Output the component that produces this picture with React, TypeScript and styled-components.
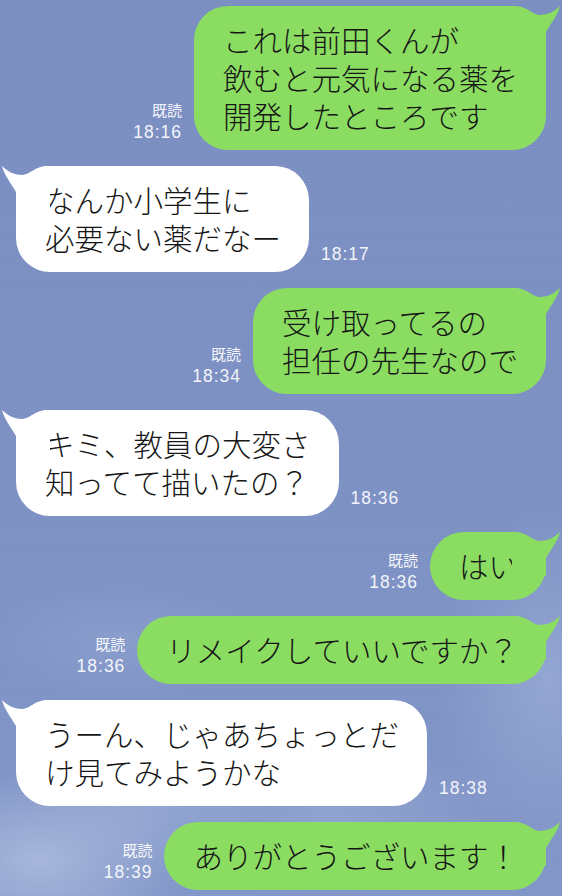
import React from "react";
import styled, { createGlobalStyle } from "styled-components";

const Global = createGlobalStyle`
  html, body { margin: 0; padding: 0; }
  body { background: #7b8fc2; }
`;

const Page = styled.div`
  width: 562px;
  height: 896px;
  overflow: hidden;
  box-sizing: border-box;
  padding-top: 6px;
  display: flex;
  flex-direction: column;
  gap: 16px;
  background:
    radial-gradient(ellipse 150px 90px at 40px 860px, rgba(205, 215, 238, 0.5), rgba(205, 215, 238, 0) 100%),
    radial-gradient(ellipse 120px 70px at 150px 800px, rgba(190, 203, 233, 0.3), rgba(190, 203, 233, 0) 100%),
    radial-gradient(ellipse 110px 170px at 550px 680px, rgba(185, 199, 232, 0.35), rgba(185, 199, 232, 0) 100%),
    radial-gradient(ellipse 180px 80px at 330px 820px, rgba(180, 195, 228, 0.3), rgba(180, 195, 228, 0) 100%),
    radial-gradient(ellipse 140px 60px at 120px 640px, rgba(170, 186, 224, 0.25), rgba(170, 186, 224, 0) 100%),
    repeating-linear-gradient(180deg, rgba(255,255,255,0.025) 0px, rgba(255,255,255,0.025) 1px, rgba(0,0,0,0) 1px, rgba(0,0,0,0) 3px),
    linear-gradient(180deg, #7a8ec1 0%, #7c90c3 50%, #8196c8 100%);
`;

const Row = styled.div<{ $me: boolean }>`
  display: flex;
  flex-direction: ${(p) => (p.$me ? "row-reverse" : "row")};
  align-items: flex-end;
  gap: 12px;
  padding: ${(p) => (p.$me ? "0 16px 0 0" : "0 0 0 16px")};
`;

const Bubble = styled.div<{ $me: boolean }>`
  position: relative;
  background: ${(p) => (p.$me ? "#8bdd62" : "#ffffff")};
  border-radius: 34px;
  padding: 14px 28px 16px 29px;
  font-family: "Noto Sans CJK JP", "Noto Sans", sans-serif;
  font-weight: 300;
  font-size: 29.5px;
  line-height: 38px;
  color: #161616;
  white-space: nowrap;
`;

const Line = styled.div`
  display: block;
`;

const Tail = styled.svg<{ $me: boolean }>`
  position: absolute;
  top: 0;
  width: 50px;
  height: 44px;
  ${(p) => (p.$me ? "right: -16px;" : "left: -16px; transform: scaleX(-1);")}
`;

const Meta = styled.div<{ $me: boolean }>`
  display: flex;
  flex-direction: column;
  align-items: ${(p) => (p.$me ? "flex-end" : "flex-start")};
  margin-bottom: 7px;
  color: rgba(255, 255, 255, 0.93);
  font-family: "Liberation Sans", "Noto Sans CJK JP", sans-serif;
`;

const Read = styled.span`
  font-family: "Noto Sans CJK JP", sans-serif;
  font-size: 15px;
  line-height: 22px;
`;

const Time = styled.span`
  font-size: 17.5px;
  letter-spacing: 1px;
  line-height: 22px;
`;

type Msg = { me: boolean; lines: string[]; time: string };

const messages: Msg[] = [
  { me: true, lines: ["これは前田くんが", "飲むと元気になる薬を", "開発したところです"], time: "18:16" },
  { me: false, lines: ["なんか小学生に", "必要ない薬だなー"], time: "18:17" },
  { me: true, lines: ["受け取ってるの", "担任の先生なので"], time: "18:34" },
  { me: false, lines: ["キミ、教員の大変さ", "知ってて描いたの？"], time: "18:36" },
  { me: true, lines: ["はい"], time: "18:36" },
  { me: true, lines: ["リメイクしていいですか？"], time: "18:36" },
  { me: false, lines: ["うーん、じゃあちょっとだ", "け見てみようかな"], time: "18:38" },
  { me: true, lines: ["ありがとうございます！"], time: "18:39" },
];

const TailShape = ({ me, color }: { me: boolean; color: string }) => (
  <Tail $me={me} viewBox="-34 0 50 44" aria-hidden="true">
    <path
      d="M -34 0 L -30 0 C -20 0 -14 9 -6 9 C 2 9 9 5 14 0 C 12 9 5 17 0 26 L 0 44 L -34 44 Z"
      fill={color}
    />
  </Tail>
);

export default function App() {
  return (
    <>
      <Global />
      <Page>
        {messages.map((m, i) => (
          <Row key={i} $me={m.me}>
            <Bubble $me={m.me}>
              <TailShape me={m.me} color={m.me ? "#8bdd62" : "#ffffff"} />
              {m.lines.map((l, j) => (
                <Line key={j}>{l}</Line>
              ))}
            </Bubble>
            <Meta $me={m.me}>
              {m.me && <Read>既読</Read>}
              <Time>{m.time}</Time>
            </Meta>
          </Row>
        ))}
      </Page>
    </>
  );
}
